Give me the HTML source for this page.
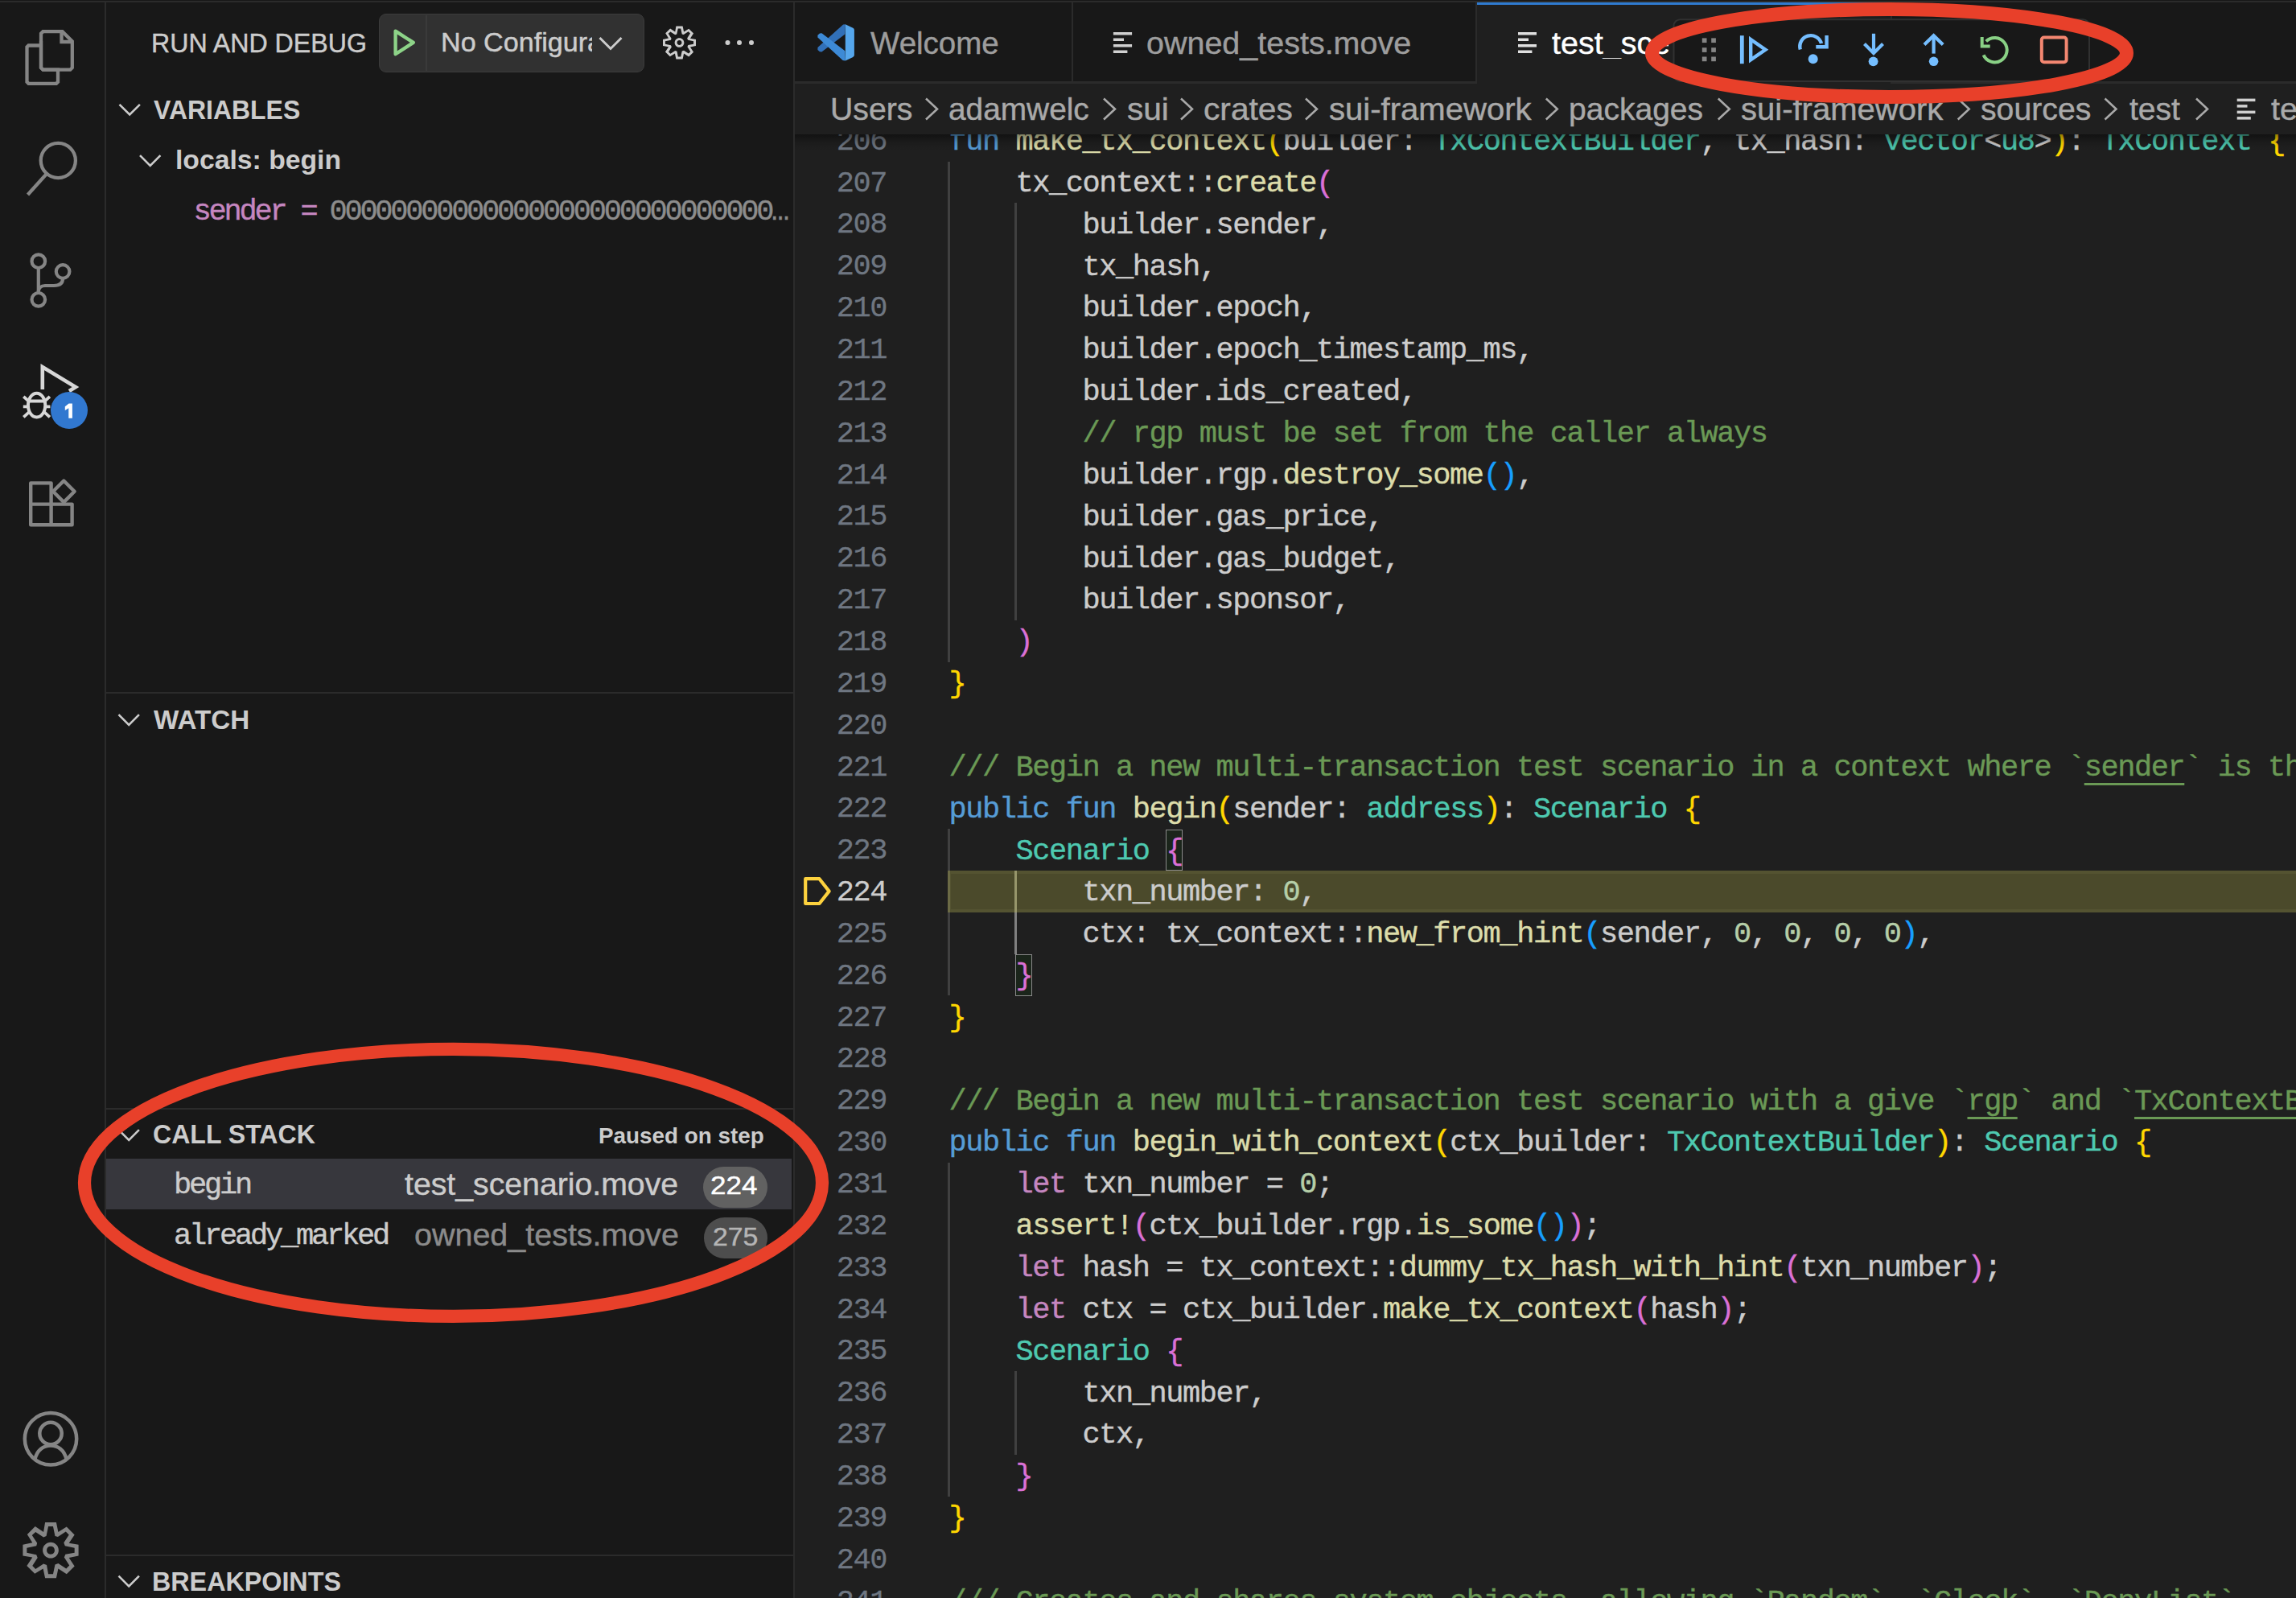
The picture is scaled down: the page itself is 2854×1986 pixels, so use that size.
<!DOCTYPE html><html><head><meta charset="utf-8"><style>
*{margin:0;padding:0;box-sizing:border-box}
html,body{width:2854px;height:1986px;overflow:hidden;background:#181818}
body{position:relative;font-family:"Liberation Sans",sans-serif;color:#cccccc}
.abs{position:absolute}
.mono{font-family:"Liberation Mono",monospace}
.cl{position:absolute;left:1179.5px;white-space:pre;-webkit-text-stroke:0.4px currentColor;font-family:"Liberation Mono",monospace;font-size:37px;letter-spacing:-1.450px;line-height:51.85px;height:51.85px}
.ln{position:absolute;left:1020px;width:82px;text-align:right;white-space:pre;-webkit-text-stroke:0.3px currentColor;font-family:"Liberation Mono",monospace;font-size:37px;letter-spacing:-1.450px;line-height:51.85px;color:#6e7681}
.u{text-decoration:underline;text-decoration-thickness:2.6px;text-underline-offset:8.5px;text-decoration-skip-ink:none}
.t{position:absolute;white-space:pre;line-height:1}
</style></head><body>
<div class="abs" style="left:0;top:1px;width:2854px;height:2px;background:#2b2b2b"></div>
<div class="abs" style="left:130px;top:3px;width:2px;height:1984px;background:#2b2b2b"></div>
<div class="abs" style="left:986px;top:3px;width:2px;height:1984px;background:#2b2b2b"></div>
<div class="abs" style="left:988px;top:3px;width:1866px;height:1984px;background:#1f1f1f;overflow:hidden" id="ed">
</div>
<div class="abs" style="left:988px;top:166px;width:1866px;height:1820px;overflow:hidden">
<div class="abs" style="left:-988px;top:-166px;width:2854px;height:1986px">
<div class="abs" style="left:1178px;top:1082px;width:1700px;height:52.2px;background:#4b4a2b;border:4.8px solid #545331;border-right:none"></div>
<div class="abs" style="left:1178.0px;top:200.5px;width:3px;height:622.2px;background:#404040"></div>
<div class="abs" style="left:1261.0px;top:252.4px;width:3px;height:518.5px;background:#404040"></div>
<div class="abs" style="left:1178.0px;top:1030.2px;width:3px;height:51.9px;background:#404040"></div>
<div class="abs" style="left:1178.0px;top:1133.8px;width:3px;height:103.7px;background:#404040"></div>
<div class="abs" style="left:1178.0px;top:1082.0px;width:3px;height:51.9px;background:#6b6a45"></div>
<div class="abs" style="left:1261.0px;top:1133.8px;width:3px;height:51.9px;background:#808080"></div>
<div class="abs" style="left:1261.0px;top:1082.0px;width:3px;height:51.9px;background:#97966b"></div>
<div class="abs" style="left:1178.0px;top:1445.0px;width:3px;height:414.8px;background:#404040"></div>
<div class="abs" style="left:1261.0px;top:1704.2px;width:3px;height:103.7px;background:#404040"></div>
<div class="abs" style="left:1448.8px;top:1030.7px;width:20.8px;height:51.4px;border:1.6px solid #8a8a8a;background:rgba(0,100,0,0.1)"></div>
<div class="abs" style="left:1262.0px;top:1186.2px;width:20.8px;height:51.4px;border:1.6px solid #8a8a8a;background:rgba(0,100,0,0.1)"></div>
<div class="ln" style="top:150.7px">206</div>
<div class="cl" style="top:151.0px"><span style="color:#569cd6">fun</span><span style="color:#cccccc"> </span><span style="color:#dcdcaa">make_tx_context</span><span style="color:#ffd700">(</span><span style="color:#cccccc">builder: </span><span style="color:#4ec9b0">TxContextBuilder</span><span style="color:#cccccc">, tx_hash: </span><span style="color:#4ec9b0">vector</span><span style="color:#cccccc">&lt;</span><span style="color:#4ec9b0">u8</span><span style="color:#cccccc">&gt;</span><span style="color:#ffd700">)</span><span style="color:#cccccc">: </span><span style="color:#4ec9b0">TxContext</span><span style="color:#cccccc"> </span><span style="color:#ffd700">{</span></div>
<div class="ln" style="top:202.5px">207</div>
<div class="cl" style="top:202.8px"><span style="color:#cccccc">    tx_context::</span><span style="color:#dcdcaa">create</span><span style="color:#da70d6">(</span></div>
<div class="ln" style="top:254.4px">208</div>
<div class="cl" style="top:254.7px"><span style="color:#cccccc">        builder.sender,</span></div>
<div class="ln" style="top:306.2px">209</div>
<div class="cl" style="top:306.6px"><span style="color:#cccccc">        tx_hash,</span></div>
<div class="ln" style="top:358.1px">210</div>
<div class="cl" style="top:358.4px"><span style="color:#cccccc">        builder.epoch,</span></div>
<div class="ln" style="top:409.9px">211</div>
<div class="cl" style="top:410.2px"><span style="color:#cccccc">        builder.epoch_timestamp_ms,</span></div>
<div class="ln" style="top:461.8px">212</div>
<div class="cl" style="top:462.1px"><span style="color:#cccccc">        builder.ids_created,</span></div>
<div class="ln" style="top:513.6px">213</div>
<div class="cl" style="top:513.9px"><span style="color:#cccccc">        </span><span style="color:#6a9955">// rgp must be set from the caller always</span></div>
<div class="ln" style="top:565.5px">214</div>
<div class="cl" style="top:565.8px"><span style="color:#cccccc">        builder.rgp.</span><span style="color:#dcdcaa">destroy_some</span><span style="color:#179fff">()</span><span style="color:#cccccc">,</span></div>
<div class="ln" style="top:617.3px">215</div>
<div class="cl" style="top:617.6px"><span style="color:#cccccc">        builder.gas_price,</span></div>
<div class="ln" style="top:669.2px">216</div>
<div class="cl" style="top:669.5px"><span style="color:#cccccc">        builder.gas_budget,</span></div>
<div class="ln" style="top:721.0px">217</div>
<div class="cl" style="top:721.3px"><span style="color:#cccccc">        builder.sponsor,</span></div>
<div class="ln" style="top:772.9px">218</div>
<div class="cl" style="top:773.2px"><span style="color:#cccccc">    </span><span style="color:#da70d6">)</span></div>
<div class="ln" style="top:824.8px">219</div>
<div class="cl" style="top:825.0px"><span style="color:#ffd700">}</span></div>
<div class="ln" style="top:876.6px">220</div>
<div class="ln" style="top:928.5px">221</div>
<div class="cl" style="top:928.8px"><span style="color:#6a9955">/// Begin a new multi-transaction test scenario in a context where `</span><span class="u" style="color:#6a9955">sender</span><span style="color:#6a9955">` is the tx sender</span></div>
<div class="ln" style="top:980.3px">222</div>
<div class="cl" style="top:980.6px"><span style="color:#569cd6">public fun</span><span style="color:#cccccc"> </span><span style="color:#dcdcaa">begin</span><span style="color:#ffd700">(</span><span style="color:#cccccc">sender: </span><span style="color:#4ec9b0">address</span><span style="color:#ffd700">)</span><span style="color:#cccccc">: </span><span style="color:#4ec9b0">Scenario</span><span style="color:#cccccc"> </span><span style="color:#ffd700">{</span></div>
<div class="ln" style="top:1032.2px">223</div>
<div class="cl" style="top:1032.5px"><span style="color:#cccccc">    </span><span style="color:#4ec9b0">Scenario</span><span style="color:#cccccc"> </span><span style="color:#da70d6">{</span></div>
<div class="ln" style="top:1084.0px;color:#cccccc">224</div>
<div class="cl" style="top:1084.3px"><span style="color:#cccccc">        txn_number: </span><span style="color:#b5cea8">0</span><span style="color:#cccccc">,</span></div>
<div class="ln" style="top:1135.8px">225</div>
<div class="cl" style="top:1136.1px"><span style="color:#cccccc">        ctx: tx_context::</span><span style="color:#dcdcaa">new_from_hint</span><span style="color:#179fff">(</span><span style="color:#cccccc">sender, </span><span style="color:#b5cea8">0</span><span style="color:#cccccc">, </span><span style="color:#b5cea8">0</span><span style="color:#cccccc">, </span><span style="color:#b5cea8">0</span><span style="color:#cccccc">, </span><span style="color:#b5cea8">0</span><span style="color:#179fff">)</span><span style="color:#cccccc">,</span></div>
<div class="ln" style="top:1187.7px">226</div>
<div class="cl" style="top:1188.0px"><span style="color:#cccccc">    </span><span style="color:#da70d6">}</span></div>
<div class="ln" style="top:1239.5px">227</div>
<div class="cl" style="top:1239.8px"><span style="color:#ffd700">}</span></div>
<div class="ln" style="top:1291.4px">228</div>
<div class="ln" style="top:1343.2px">229</div>
<div class="cl" style="top:1343.5px"><span style="color:#6a9955">/// Begin a new multi-transaction test scenario with a give `</span><span class="u" style="color:#6a9955">rgp</span><span style="color:#6a9955">` and `</span><span class="u" style="color:#6a9955">TxContextBuilder</span><span style="color:#6a9955">`.</span></div>
<div class="ln" style="top:1395.1px">230</div>
<div class="cl" style="top:1395.4px"><span style="color:#569cd6">public fun</span><span style="color:#cccccc"> </span><span style="color:#dcdcaa">begin_with_context</span><span style="color:#ffd700">(</span><span style="color:#cccccc">ctx_builder: </span><span style="color:#4ec9b0">TxContextBuilder</span><span style="color:#ffd700">)</span><span style="color:#cccccc">: </span><span style="color:#4ec9b0">Scenario</span><span style="color:#cccccc"> </span><span style="color:#ffd700">{</span></div>
<div class="ln" style="top:1447.0px">231</div>
<div class="cl" style="top:1447.2px"><span style="color:#cccccc">    </span><span style="color:#c586c0">let</span><span style="color:#cccccc"> txn_number = </span><span style="color:#b5cea8">0</span><span style="color:#cccccc">;</span></div>
<div class="ln" style="top:1498.8px">232</div>
<div class="cl" style="top:1499.1px"><span style="color:#cccccc">    </span><span style="color:#dcdcaa">assert!</span><span style="color:#da70d6">(</span><span style="color:#cccccc">ctx_builder.rgp.</span><span style="color:#dcdcaa">is_some</span><span style="color:#179fff">()</span><span style="color:#da70d6">)</span><span style="color:#cccccc">;</span></div>
<div class="ln" style="top:1550.7px">233</div>
<div class="cl" style="top:1551.0px"><span style="color:#cccccc">    </span><span style="color:#c586c0">let</span><span style="color:#cccccc"> hash = tx_context::</span><span style="color:#dcdcaa">dummy_tx_hash_with_hint</span><span style="color:#da70d6">(</span><span style="color:#cccccc">txn_number</span><span style="color:#da70d6">)</span><span style="color:#cccccc">;</span></div>
<div class="ln" style="top:1602.5px">234</div>
<div class="cl" style="top:1602.8px"><span style="color:#cccccc">    </span><span style="color:#c586c0">let</span><span style="color:#cccccc"> ctx = ctx_builder.</span><span style="color:#dcdcaa">make_tx_context</span><span style="color:#da70d6">(</span><span style="color:#cccccc">hash</span><span style="color:#da70d6">)</span><span style="color:#cccccc">;</span></div>
<div class="ln" style="top:1654.3px">235</div>
<div class="cl" style="top:1654.6px"><span style="color:#cccccc">    </span><span style="color:#4ec9b0">Scenario</span><span style="color:#cccccc"> </span><span style="color:#da70d6">{</span></div>
<div class="ln" style="top:1706.2px">236</div>
<div class="cl" style="top:1706.5px"><span style="color:#cccccc">        txn_number,</span></div>
<div class="ln" style="top:1758.1px">237</div>
<div class="cl" style="top:1758.4px"><span style="color:#cccccc">        ctx,</span></div>
<div class="ln" style="top:1809.9px">238</div>
<div class="cl" style="top:1810.2px"><span style="color:#cccccc">    </span><span style="color:#da70d6">}</span></div>
<div class="ln" style="top:1861.8px">239</div>
<div class="cl" style="top:1862.0px"><span style="color:#ffd700">}</span></div>
<div class="ln" style="top:1913.6px">240</div>
<div class="ln" style="top:1965.5px">241</div>
<div class="cl" style="top:1965.8px"><span style="color:#6a9955">/// Creates and shares system objects, allowing `</span><span class="u" style="color:#6a9955">Random</span><span style="color:#6a9955">`, `</span><span class="u" style="color:#6a9955">Clock</span><span style="color:#6a9955">`, `</span><span class="u" style="color:#6a9955">DenyList</span><span style="color:#6a9955">`</span></div>
</div></div>
<div class="abs" style="left:988px;top:3px;width:1866px;height:98px;background:#181818"></div>
<div class="abs" style="left:988px;top:101px;width:1866px;height:3px;background:#2b2b2b"></div>
<div class="abs" style="left:1332px;top:3px;width:2px;height:98px;background:#2b2b2b"></div>
<div class="abs" style="left:1834px;top:3px;width:2px;height:98px;background:#2b2b2b"></div>
<div class="abs" style="left:2350px;top:3px;width:2px;height:98px;background:#2b2b2b"></div>
<div class="abs" style="left:1836px;top:3px;width:514px;height:101px;background:#1f1f1f"></div>
<div class="abs" style="left:1836px;top:3px;width:514px;height:3px;background:#2f7bd0"></div>
<div class="abs" style="left:988px;top:104px;width:1866px;height:62.5px;background:#1f1f1f"></div>
<div class="abs" style="left:988px;top:166.5px;width:1866px;height:20px;background:linear-gradient(rgba(0,0,0,0.42),rgba(0,0,0,0.12) 50%,rgba(0,0,0,0))"></div>
<div class="t" style="left:187.78px;top:37.3px;font-size:33px;font-weight:400;color:#cccccc;letter-spacing:0px;transform:scaleX(0.9741);transform-origin:0 0;-webkit-text-stroke:0.45px currentColor;">RUN AND DEBUG</div>
<div class="abs" style="left:470.5px;top:17px;width:330px;height:72.5px;background:#313131;border:1.5px solid #3c3c3c;border-radius:9px"></div>
<div class="abs" style="left:529px;top:18.5px;width:2px;height:69.5px;background:#3a3a3a"></div>
<div class="t" style="left:547.90px;top:36.1px;font-size:33px;font-weight:400;color:#cccccc;letter-spacing:0px;transform:scaleX(1.0339);transform-origin:0 0;-webkit-text-stroke:0.45px currentColor;">No Configura</div>
<div class="abs" style="left:736.3px;top:30px;width:18px;height:48px;background:#313131"></div>
<div class="t" style="left:190.70px;top:119.5px;font-size:33px;font-weight:700;color:#cccccc;letter-spacing:0px;transform:scaleX(0.9679);transform-origin:0 0;">VARIABLES</div>
<div class="t" style="left:217.52px;top:181.2px;font-size:34px;font-weight:700;color:#cccccc;letter-spacing:0px;transform:scaleX(0.9912);transform-origin:0 0;">locals: begin</div>
<div class="t mono" style="left:240.5px;top:244.9px;font-size:37px;letter-spacing:-3.200px;color:#cccccc;-webkit-text-stroke:0.4px currentColor;"><span style="color:#c586c0">sender =</span></div>
<div class="t mono" style="left:409.5px;top:244.9px;font-size:37px;letter-spacing:-3.246px;color:#cccccc;-webkit-text-stroke:0.4px currentColor;"><span style="color:#8c8c8c">00000000000000000000000000000</span></div>
<div class="t mono" style="left:959.0px;top:244.9px;font-size:37px;letter-spacing:0.000px;color:#cccccc;-webkit-text-stroke:0.4px currentColor;"><span style="color:#8c8c8c">…</span></div>
<div class="abs" style="left:131.5px;top:860px;width:854px;height:2px;background:#2b2b2b"></div>
<div class="t" style="left:190.90px;top:878.3px;font-size:33px;font-weight:700;color:#cccccc;letter-spacing:0px;transform:scaleX(1.0060);transform-origin:0 0;">WATCH</div>
<div class="abs" style="left:131.5px;top:1376.5px;width:854px;height:2px;background:#2b2b2b"></div>
<div class="t" style="left:189.63px;top:1393.1px;font-size:33px;font-weight:700;color:#cccccc;letter-spacing:0px;transform:scaleX(0.9714);transform-origin:0 0;">CALL STACK</div>
<div class="t" style="left:743.85px;top:1397.1px;font-size:28.5px;font-weight:700;color:#cccccc;letter-spacing:0px;transform:scaleX(0.9769);transform-origin:0 0;">Paused on step</div>
<div class="abs" style="left:131.5px;top:1440px;width:852.5px;height:62.6px;background:#37373d"></div>
<div class="t mono" style="left:216.0px;top:1455.2px;font-size:37px;letter-spacing:-3.200px;color:#cccccc;-webkit-text-stroke:0.4px currentColor;">begin</div>
<div class="t" style="left:503.00px;top:1452.2px;font-size:39.5px;font-weight:400;color:#cccccc;letter-spacing:0px;transform:scaleX(0.9930);transform-origin:0 0;-webkit-text-stroke:0.45px currentColor;">test_scenario.move</div>
<div class="abs" style="left:873.5px;top:1449.6px;width:80.5px;height:51px;background:#616161;border-radius:26px"></div>
<div class="t" style="left:882.91px;top:1457.3px;font-size:32px;font-weight:400;color:#ffffff;letter-spacing:0px;transform:scaleX(1.0942);transform-origin:0 0;-webkit-text-stroke:0.45px currentColor;">224</div>
<div class="t mono" style="left:216.0px;top:1517.7px;font-size:37px;letter-spacing:-3.200px;color:#cccccc;-webkit-text-stroke:0.4px currentColor;">already_marked</div>
<div class="t" style="left:515.30px;top:1514.6px;font-size:39.5px;font-weight:400;color:#8b8b8b;letter-spacing:0px;transform:scaleX(0.9991);transform-origin:0 0;-webkit-text-stroke:0.45px currentColor;">owned_tests.move</div>
<div class="abs" style="left:874.5px;top:1513px;width:79.5px;height:51px;background:#4d4d4d;border-radius:26px"></div>
<div class="t" style="left:885.94px;top:1520.9px;font-size:32px;font-weight:400;color:#b5b5b5;letter-spacing:0px;transform:scaleX(1.0569);transform-origin:0 0;-webkit-text-stroke:0.45px currentColor;">275</div>
<div class="abs" style="left:131.5px;top:1931.5px;width:854px;height:2px;background:#2b2b2b"></div>
<div class="t" style="left:189.04px;top:1949.1px;font-size:33px;font-weight:700;color:#cccccc;letter-spacing:0px;transform:scaleX(0.9781);transform-origin:0 0;">BREAKPOINTS</div>
<div class="t" style="left:1081.50px;top:33.9px;font-size:39.5px;font-weight:400;color:#9d9d9d;letter-spacing:0px;transform:scaleX(0.9747);transform-origin:0 0;-webkit-text-stroke:0.45px currentColor;">Welcome</div>
<div class="t" style="left:1424.60px;top:33.7px;font-size:39.5px;font-weight:400;color:#9d9d9d;letter-spacing:0px;transform:scaleX(0.9994);transform-origin:0 0;-webkit-text-stroke:0.45px currentColor;">owned_tests.move</div>
<div class="t" style="left:1929.00px;top:33.7px;font-size:39.5px;font-weight:400;color:#ffffff;letter-spacing:0px;width:145px;overflow:hidden;transform:scaleX(1.0000);transform-origin:0 0;-webkit-text-stroke:0.45px currentColor;">test_scenario.move</div>
<div class="t" style="left:1032.32px;top:115.6px;font-size:39.5px;font-weight:400;color:#a9a9a9;letter-spacing:0px;transform:scaleX(0.9919);transform-origin:0 0;-webkit-text-stroke:0.45px currentColor;">Users</div>
<div class="t" style="left:1179.43px;top:115.6px;font-size:39.5px;font-weight:400;color:#a9a9a9;letter-spacing:0px;transform:scaleX(0.9829);transform-origin:0 0;-webkit-text-stroke:0.45px currentColor;">adamwelc</div>
<div class="t" style="left:1400.67px;top:115.6px;font-size:39.5px;font-weight:400;color:#a9a9a9;letter-spacing:0px;transform:scaleX(1.0277);transform-origin:0 0;-webkit-text-stroke:0.45px currentColor;">sui</div>
<div class="t" style="left:1495.84px;top:115.6px;font-size:39.5px;font-weight:400;color:#a9a9a9;letter-spacing:0px;transform:scaleX(1.0298);transform-origin:0 0;-webkit-text-stroke:0.45px currentColor;">crates</div>
<div class="t" style="left:1651.59px;top:115.6px;font-size:39.5px;font-weight:400;color:#a9a9a9;letter-spacing:0px;transform:scaleX(1.0146);transform-origin:0 0;-webkit-text-stroke:0.45px currentColor;">sui-framework</div>
<div class="t" style="left:1950.02px;top:115.6px;font-size:39.5px;font-weight:400;color:#a9a9a9;letter-spacing:0px;transform:scaleX(0.9880);transform-origin:0 0;-webkit-text-stroke:0.45px currentColor;">packages</div>
<div class="t" style="left:2163.69px;top:115.6px;font-size:39.5px;font-weight:400;color:#a9a9a9;letter-spacing:0px;transform:scaleX(1.0134);transform-origin:0 0;-webkit-text-stroke:0.45px currentColor;">sui-framework</div>
<div class="t" style="left:2462.01px;top:115.6px;font-size:39.5px;font-weight:400;color:#a9a9a9;letter-spacing:0px;transform:scaleX(0.9926);transform-origin:0 0;-webkit-text-stroke:0.45px currentColor;">sources</div>
<div class="t" style="left:2646.70px;top:115.6px;font-size:39.5px;font-weight:400;color:#a9a9a9;letter-spacing:0px;transform:scaleX(0.9891);transform-origin:0 0;-webkit-text-stroke:0.45px currentColor;">test</div>
<div class="t" style="left:2823.00px;top:115.6px;font-size:39.5px;font-weight:400;color:#a9a9a9;letter-spacing:0px;transform:scaleX(1.0000);transform-origin:0 0;-webkit-text-stroke:0.45px currentColor;">test_scenario.move</div>
<svg class="abs" style="left:0;top:0" width="2854" height="1986" viewBox="0 0 2854 1986"><path d="M51 51 V84.2 L53.5 86.7 H72 V101.8 L70 103.8 H35.5 L33.5 101.8 V58.5 L35.5 56.5 H51" fill="none" stroke="#858585" stroke-width="4.3" stroke-linejoin="miter"/><path d="M53.5 39.2 H77.5 L89.8 51.5 V84.2 L87.3 86.7 H53.5 L51 84.2 V41.7 Z" fill="none" stroke="#858585" stroke-width="4.3"/><path d="M76.5 40 V52 H89" fill="none" stroke="#858585" stroke-width="4.3"/><circle cx="72.3" cy="199.5" r="21.6" fill="none" stroke="#858585" stroke-width="4.3"/><path d="M57.5 216.5 L34.5 242" fill="none" stroke="#858585" stroke-width="4.3"/><circle cx="47.8" cy="324.7" r="8.3" fill="none" stroke="#858585" stroke-width="4.2"/><circle cx="78.1" cy="337.5" r="8.3" fill="none" stroke="#858585" stroke-width="4.2"/><circle cx="47.8" cy="372.3" r="8.3" fill="none" stroke="#858585" stroke-width="4.2"/><path d="M47.8 333 V364" fill="none" stroke="#858585" stroke-width="4.2"/><path d="M78.1 345.8 C78.1 352 74 355 67 355 H56 C51 355 47.8 358 47.8 363" fill="none" stroke="#858585" stroke-width="4.2"/><path d="M52.8 484 V456 L94 481 L86 486" fill="none" stroke="#d7d7d7" stroke-width="4.6" stroke-linejoin="miter"/><ellipse cx="45.6" cy="503.6" rx="10.7" ry="14.9" fill="none" stroke="#d7d7d7" stroke-width="4"/><path d="M36.2 499.2 L29.3 492.8 M55 499.2 L61.9 492.8 M28.8 505.4 H34.5 M56.7 505.4 H62.4 M36.2 512.2 L29.3 518.4 M55 512.2 L61.9 518.4 M35.5 498.5 H55.7" fill="none" stroke="#d7d7d7" stroke-width="3.8"/><circle cx="86" cy="510" r="23" fill="#3178d0"/><path d="M80.8 505.3 L85.6 501.4 H89.9 V519.8 H85.3 V507.2 L80.8 510 Z" fill="#ffffff"/><path d="M38.2 600.4 H63.6 V652.3 H38.2 Z M38.2 626.6 H89.6 V652.3 H63.6" fill="none" stroke="#858585" stroke-width="4.4" stroke-linejoin="round"/><path d="M66 610.8 L79.3 597.5 L92.6 610.8 L79.3 624.1 Z" fill="none" stroke="#858585" stroke-width="4.4" stroke-linejoin="round"/><circle cx="63" cy="1788.3" r="32.2" fill="none" stroke="#858585" stroke-width="4.5"/><circle cx="63" cy="1781.5" r="13.7" fill="none" stroke="#858585" stroke-width="4.5"/><path d="M43.5 1813.5 C46 1802 54 1796.5 63 1796.5 C72 1796.5 80 1802 82.5 1813.5" fill="none" stroke="#858585" stroke-width="4.5"/><path transform="translate(23.46,1887.16) scale(4.943)" d="M9.1 4.4L8.6 2H7.4l-.5 2.4-.7.3-2-1.3-.9.8 1.3 2-.2.7-2.4.5v1.2l2.4.5.3.8-1.3 2 .8.8 2-1.3.8.3.4 2.3h1.2l.5-2.4.8-.3 2 1.3.8-.8-1.3-2 .3-.8 2.3-.4V7.4l-2.4-.5-.3-.8 1.3-2-.8-.8-2 1.3-.7-.2zM9.4 1l.5 2.4L12 2.1l2 2-1.4 2.1 2.4.4v2.8l-2.4.5L14 12l-2 2-2.1-1.4-.5 2.4H6.6l-.5-2.4L4 13.9l-2-2 1.4-2.1L1 9.4V6.6l2.4-.5L2.1 4l2-2 2.1 1.4.4-2.4h2.8zm.6 7c0 1.1-.9 2-2 2s-2-.9-2-2 .9-2 2-2 2 .9 2 2zM8 9c.6 0 1-.4 1-1s-.4-1-1-1-1 .4-1 1 .4 1 1 1z" fill="#858585" fill-rule="evenodd"/><path transform="translate(821.07,29.57) scale(2.929)" d="M9.1 4.4L8.6 2H7.4l-.5 2.4-.7.3-2-1.3-.9.8 1.3 2-.2.7-2.4.5v1.2l2.4.5.3.8-1.3 2 .8.8 2-1.3.8.3.4 2.3h1.2l.5-2.4.8-.3 2 1.3.8-.8-1.3-2 .3-.8 2.3-.4V7.4l-2.4-.5-.3-.8 1.3-2-.8-.8-2 1.3-.7-.2zM9.4 1l.5 2.4L12 2.1l2 2-1.4 2.1 2.4.4v2.8l-2.4.5L14 12l-2 2-2.1-1.4-.5 2.4H6.6l-.5-2.4L4 13.9l-2-2 1.4-2.1L1 9.4V6.6l2.4-.5L2.1 4l2-2 2.1 1.4.4-2.4h2.8zm.6 7c0 1.1-.9 2-2 2s-2-.9-2-2 .9-2 2-2 2 .9 2 2zM8 9c.6 0 1-.4 1-1s-.4-1-1-1-1 .4-1 1 .4 1 1 1z" fill="#cccccc" fill-rule="evenodd"/><circle cx="904.5" cy="53" r="3" fill="#cccccc"/><circle cx="919" cy="53" r="3" fill="#cccccc"/><circle cx="934" cy="53" r="3" fill="#cccccc"/><path d="M491.6 38.6 L513.8 52.9 L491.6 67.3 Z" fill="none" stroke="#8dd388" stroke-width="4.3" stroke-linejoin="round"/><path d="M745.5 47 L759 60.5 L772.5 47" fill="none" stroke="#cccccc" stroke-width="3"/><path d="M148.5 129.79999999999998 L161.2 142.4 L173.9 129.79999999999998" fill="none" stroke="#cccccc" stroke-width="2.6"/><path d="M174.0 193.2 L186.7 205.8 L199.4 193.2" fill="none" stroke="#cccccc" stroke-width="2.6"/><path d="M147.5 888.2 L160.2 900.8 L172.9 888.2" fill="none" stroke="#cccccc" stroke-width="2.6"/><path d="M147.5 1404.2 L160.2 1416.8 L172.9 1404.2" fill="none" stroke="#cccccc" stroke-width="2.6"/><path d="M147.5 1958.7 L160.2 1971.3 L172.9 1958.7" fill="none" stroke="#cccccc" stroke-width="2.6"/><g transform="translate(1015.8,29.8) scale(0.461)"><path d="M70 1.5 L76 0.9 L75 27.3 L12.2 75 L6.8 74.8 L1.3 69.7 L1.3 63.6 Z" fill="#3170b8"/><path d="M6.8 25.2 L12.2 25 L75 72.7 L75.9 99.1 L69 98 L1.3 36.4 L1.3 30.3 Z" fill="#3d8ad6"/><path d="M75.9 0.9 L96.5 10.8 Q100 12.5 100 16.4 V83.6 Q100 87.5 96.5 89.2 L75.9 99.1 Z" fill="#55a6ec"/></g><rect x="1383.9" y="40.0" width="23.2" height="3.5" fill="#d0d0d0"/><rect x="1383.9" y="47.5" width="13.1" height="3.5" fill="#d0d0d0"/><rect x="1383.9" y="55.0" width="23.2" height="3.5" fill="#d0d0d0"/><rect x="1383.9" y="62.5" width="17.5" height="3.5" fill="#d0d0d0"/><rect x="1887" y="40.0" width="23.0" height="3.5" fill="#e0e0e0"/><rect x="1887" y="47.5" width="13.0" height="3.5" fill="#e0e0e0"/><rect x="1887" y="55.0" width="23.0" height="3.5" fill="#e0e0e0"/><rect x="1887" y="62.5" width="17.4" height="3.5" fill="#e0e0e0"/><rect x="2780.7" y="122.6" width="22.7" height="3.5" fill="#d0d0d0"/><rect x="2780.7" y="130.1" width="12.8" height="3.5" fill="#d0d0d0"/><rect x="2780.7" y="137.6" width="22.7" height="3.5" fill="#d0d0d0"/><rect x="2780.7" y="145.1" width="17.1" height="3.5" fill="#d0d0d0"/><path d="M1151 122.5 L1165 135.5 L1151 148.5" fill="none" stroke="#a9a9a9" stroke-width="2.6"/><path d="M1372 122.5 L1386 135.5 L1372 148.5" fill="none" stroke="#a9a9a9" stroke-width="2.6"/><path d="M1468 122.5 L1482 135.5 L1468 148.5" fill="none" stroke="#a9a9a9" stroke-width="2.6"/><path d="M1623 122.5 L1637 135.5 L1623 148.5" fill="none" stroke="#a9a9a9" stroke-width="2.6"/><path d="M1921.8 122.5 L1935.8 135.5 L1921.8 148.5" fill="none" stroke="#a9a9a9" stroke-width="2.6"/><path d="M2135.8 122.5 L2149.8 135.5 L2135.8 148.5" fill="none" stroke="#a9a9a9" stroke-width="2.6"/><path d="M2433.7 122.5 L2447.7 135.5 L2433.7 148.5" fill="none" stroke="#a9a9a9" stroke-width="2.6"/><path d="M2616.5 122.5 L2630.5 135.5 L2616.5 148.5" fill="none" stroke="#a9a9a9" stroke-width="2.6"/><path d="M2730 122.5 L2744 135.5 L2730 148.5" fill="none" stroke="#a9a9a9" stroke-width="2.6"/><path d="M1001.2 1092.2 H1018.5 L1030.6 1107.6 L1018.5 1123 H1001.2 Z" fill="none" stroke="#fdd23e" stroke-width="4.2" stroke-linejoin="round"/><rect x="2080.5" y="24.2" width="516.5" height="76.8" rx="8" fill="#181818" stroke="#313131" stroke-width="2"/><rect x="2115.8" y="47.4" width="5.7" height="5.7" fill="#858585"/><rect x="2115.8" y="59.2" width="5.7" height="5.7" fill="#858585"/><rect x="2115.8" y="70.5" width="5.7" height="5.7" fill="#858585"/><rect x="2127.2" y="47.4" width="5.7" height="5.7" fill="#858585"/><rect x="2127.2" y="59.2" width="5.7" height="5.7" fill="#858585"/><rect x="2127.2" y="70.5" width="5.7" height="5.7" fill="#858585"/><rect x="2162.9" y="44.2" width="4.8" height="35" fill="#75beff"/><path d="M2176.2 49 L2194.5 61.7 L2176.2 74.4 Z" fill="none" stroke="#75beff" stroke-width="4.4" stroke-linejoin="miter"/><path d="M2237.8 61.5 A13.6 13.6 0 0 1 2264 54" fill="none" stroke="#75beff" stroke-width="4.4"/><path d="M2270.6 44 V58.3 H2257.3" fill="none" stroke="#75beff" stroke-width="4.4"/><circle cx="2253.7" cy="73.3" r="6" fill="#75beff"/><path d="M2329 41.8 V66" fill="none" stroke="#75beff" stroke-width="4.2"/><path d="M2317.5 54.5 L2329 66 L2340.5 54.5" fill="none" stroke="#75beff" stroke-width="4.2"/><circle cx="2328.6" cy="76.3" r="5.9" fill="#75beff"/><path d="M2403.6 45 V66.6" fill="none" stroke="#75beff" stroke-width="4.2"/><path d="M2392 55.5 L2403.6 44.2 L2415.2 55.5" fill="none" stroke="#75beff" stroke-width="4.2"/><circle cx="2403.6" cy="76.3" r="5.8" fill="#75beff"/><path d="M2468.75 51.45 A15.2 15.2 0 1 1 2465.6 68.4" fill="none" stroke="#89d185" stroke-width="4"/><path d="M2463.7 46 V57.5 H2473.7" fill="none" stroke="#89d185" stroke-width="4"/><rect x="2537.8" y="46.5" width="30.8" height="30.8" rx="3" fill="none" stroke="#f48771" stroke-width="4"/><ellipse cx="2348.5" cy="66" rx="295" ry="54.5" fill="none" stroke="#e8402a" stroke-width="17"/><ellipse cx="563.5" cy="1469.9" rx="458.5" ry="166" fill="none" stroke="#e8402a" stroke-width="16.2"/></svg>
</body></html>
